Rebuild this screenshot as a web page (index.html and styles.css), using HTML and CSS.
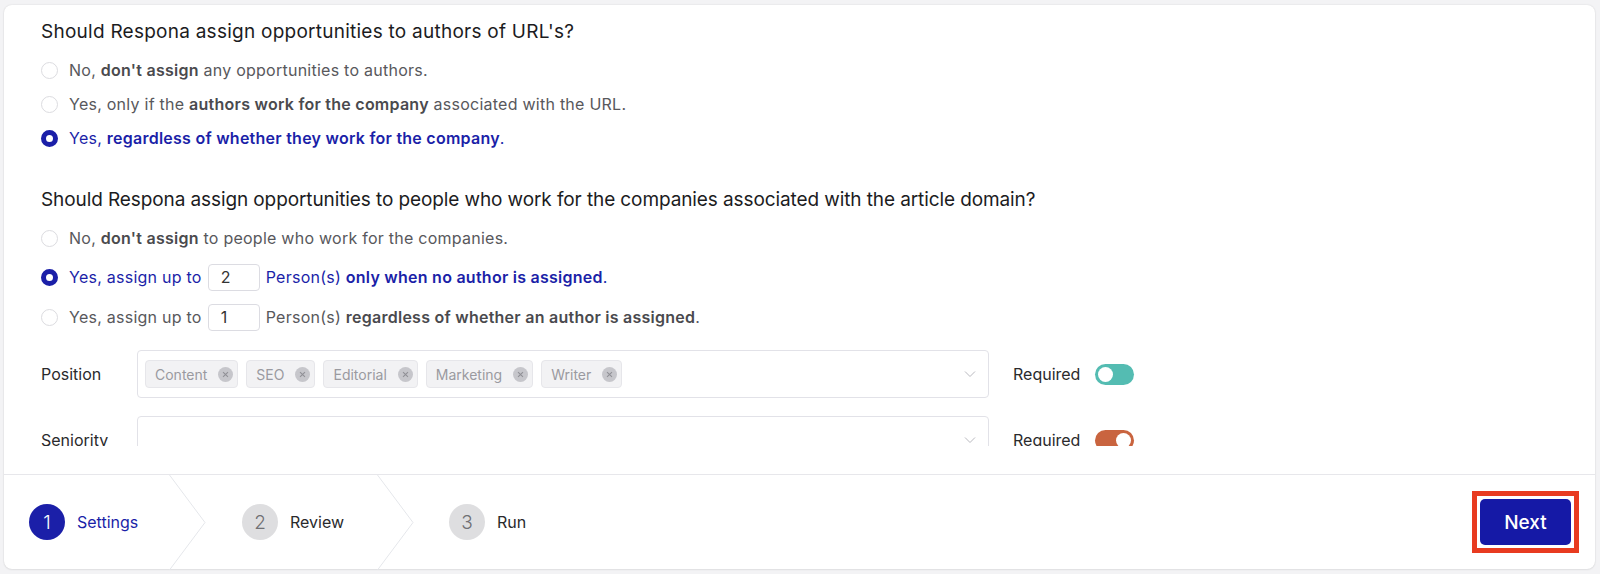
FILE: index.html
```html
<!DOCTYPE html>
<html>
<head>
<meta charset="utf-8">
<link rel="stylesheet" href="styles.css">
</head>
<body>
<div class="card">
  <div class="content">
    <div class="question q1">Should Respona assign opportunities to authors of URL's?</div>
    <div class="opt"><span class="radio"></span><span class="txt">No, <b>don't assign</b> any opportunities to authors.</span></div>
    <div class="opt"><span class="radio"></span><span class="txt">Yes, only if the <b>authors work for the company</b> associated with the URL.</span></div>
    <div class="opt sel"><span class="radio"></span><span class="txt">Yes, <b>regardless of whether they work for the company</b>.</span></div>

    <div class="question q2">Should Respona assign opportunities to people who work for the companies associated with the article domain?</div>
    <div class="opt o1"><span class="radio"></span><span class="txt">No, <b>don't assign</b> to people who work for the companies.</span></div>
    <div class="opt o2 sel"><span class="radio"></span><span class="txt">Yes, assign up to</span><span class="num">2</span><span class="txt">Person(s) <b>only when no author is assigned</b>.</span></div>
    <div class="opt o3"><span class="radio"></span><span class="txt">Yes, assign up to</span><span class="num">1</span><span class="txt">Person(s) <b>regardless of whether an author is assigned</b>.</span></div>

    <div class="field f1">
      <div class="label">Position</div>
      <div class="select">
        <div class="chips">
          <span class="chip">Content<i class="x"></i></span>
          <span class="chip">SEO<i class="x"></i></span>
          <span class="chip">Editorial<i class="x"></i></span>
          <span class="chip">Marketing<i class="x"></i></span>
          <span class="chip">Writer<i class="x"></i></span>
        </div>
        <svg class="chev" width="12" height="8" viewBox="0 0 12 8"><path d="M1 1.5 L6 6.5 L11 1.5" fill="none" stroke="#b9b9bf" stroke-width="1"/></svg>
      </div>
      <div class="req">Required</div>
      <span class="toggle teal"><span class="knob"></span></span>
    </div>
    <div class="field f2">
      <div class="label">Seniority</div>
      <div class="select">
        <div class="chips"></div>
        <svg class="chev" width="12" height="8" viewBox="0 0 12 8"><path d="M1 1.5 L6 6.5 L11 1.5" fill="none" stroke="#b9b9bf" stroke-width="1"/></svg>
      </div>
      <div class="req">Required</div>
      <span class="toggle orange"><span class="knob"></span></span>
    </div>
  </div>
  <div class="spacer"></div>
  <div class="footer">
    <div class="step s1 active"><span class="circ">1</span><span class="sname">Settings</span>
      <svg class="sep" width="37" height="95" viewBox="0 0 37 95"><path d="M0.5 0 L36 47.5 L0.5 95" fill="none" stroke="#e5e7eb" stroke-width="1"/></svg></div>
    <div class="step s2"><span class="circ">2</span><span class="sname">Review</span>
      <svg class="sep" width="37" height="95" viewBox="0 0 37 95"><path d="M0.5 0 L36 47.5 L0.5 95" fill="none" stroke="#e5e7eb" stroke-width="1"/></svg></div>
    <div class="step s3"><span class="circ">3</span><span class="sname">Run</span></div>
    <div class="grow"></div>
    <div class="hl"><button class="next">Next</button></div>
  </div>
</div>
</body>
</html>
```
FILE: styles.css
```css
* { box-sizing: border-box; }
html, body { margin: 0; padding: 0; }
body {
  background: #f3f3f5;
  font-family: Inter, "Noto Sans", sans-serif;
  width: 1600px;
  height: 574px;
  overflow: hidden;
}
.card {
  margin: 5px 5px 5px 4px;
  height: 564px;
  background: #fff;
  border-radius: 8px;
  box-shadow: 0 0 2px rgba(0,0,0,0.12), 0 1px 2px rgba(0,0,0,0.05);
  display: flex;
  flex-direction: column;
}
.content {
  height: 441px;
  overflow: hidden;
  padding: 15px 0 0 37px;
  flex: none;
}
.question {
  font-size: 19px;
  line-height: 24px;
  color: #1c1c1e;
}
.q1 { margin-bottom: 9px; letter-spacing: 0.25px; }
.q2 { margin-top: 33px; margin-bottom: 7px; letter-spacing: -0.1px; }
.opt {
  display: flex;
  align-items: center;
  height: 34px;
  font-size: 16px;
  letter-spacing: 0.25px;
  color: #58585c;
}
.opt b { font-weight: 600; color: #4a4a4e; }
.opt.o1 { height: 38px; }
.opt.o2, .opt.o3 { height: 40px; }
.opt.sel { color: #1b1fa8; }
.opt.sel b { color: #1b1fa8; }
.radio {
  width: 17px;
  height: 17px;
  border-radius: 50%;
  border: 1px solid #dcdce0;
  margin-right: 11px;
  flex: none;
}
.sel .radio {
  border: 5.5px solid #1b1fa8;
  background: #fff;
}
.num {
  width: 52px;
  height: 27px;
  border: 1px solid #dcdce2;
  border-radius: 4px;
  margin: 0 6px;
  padding-left: 12px;
  display: flex;
  align-items: center;
  color: #333;
  font-size: 16px;
  flex: none;
}
.field {
  display: flex;
  align-items: center;
  height: 48px;
}
.f1 { margin-top: 13px; }
.f2 { margin-top: 18px; }
.label {
  width: 96px;
  font-size: 16px;
  color: #2a2a2c;
}
.select {
  width: 852px;
  height: 48px;
  border: 1px solid #e2e2e8;
  border-radius: 4px;
  display: flex;
  align-items: center;
  padding: 0 12px 0 7px;
}
.chips { display: flex; gap: 8px; flex: 1; }
.chip {
  display: inline-flex;
  align-items: center;
  height: 28px;
  padding: 0 4px 0 9px;
  background: #f2f2f4;
  border: 1px solid #e6e6ea;
  border-radius: 4px;
  font-size: 14px;
  color: #9a9aa0;
  gap: 11px;
}
.x {
  width: 15px;
  height: 15px;
  border-radius: 50%;
  background: #c6c6cb;
  position: relative;
  display: inline-block;
}
.x::before, .x::after {
  content: "";
  position: absolute;
  left: 7px;
  top: 4px;
  width: 1px;
  height: 7px;
  background: #8f8f95;
}
.x::before { transform: rotate(45deg); }
.x::after { transform: rotate(-45deg); }
.chev { flex: none; }
.req {
  margin-left: 24px;
  font-size: 16px;
  color: #2a2a2c;
  width: 82px;
}
.toggle {
  width: 39px;
  height: 21px;
  border-radius: 11px;
  position: relative;
  display: inline-block;
}
.toggle.teal { background: #54bcb2; }
.toggle.orange { background: #c9643f; }
.knob {
  position: absolute;
  top: 3px;
  width: 15px;
  height: 15px;
  border-radius: 50%;
  background: #fff;
}
.teal .knob { left: 3px; }
.orange .knob { right: 3px; }
.spacer { height: 28px; flex: none; }
.footer {
  border-top: 1px solid #e7e7eb;
  flex: 1;
  display: flex;
  align-items: center;
}
.step {
  position: relative;
  height: 100%;
  display: flex;
  align-items: center;
  flex: none;
}
.s1 { width: 166px; padding-left: 25px; }
.s2 { width: 208px; padding-left: 72px; }
.s3 { padding-left: 71px; }
.sep { position: absolute; right: -36px; top: 0; }
.circ {
  width: 36px;
  height: 36px;
  border-radius: 50%;
  background: #dedee0;
  color: #707074;
  display: flex;
  align-items: center;
  justify-content: center;
  font-size: 19px;
  font-weight: 300;
  margin-right: 12px;
}
.active .circ { background: #1b1fa8; color: #fff; }
.sname { font-size: 16px; color: #2a2a2c; }
.active .sname { color: #1b1fa8; }
.grow { flex: 1; }
.hl {
  border: 5px solid #e83b20;
  padding: 3px;
  background: #fff;
  margin-right: 16px;
}
.next {
  display: block;
  width: 91px;
  height: 46px;
  border: none;
  border-radius: 5px;
  background: #1519a6;
  color: #fff;
  font-family: Inter, "Noto Sans", sans-serif;
  font-size: 19px;
  font-weight: 500;
}
```
